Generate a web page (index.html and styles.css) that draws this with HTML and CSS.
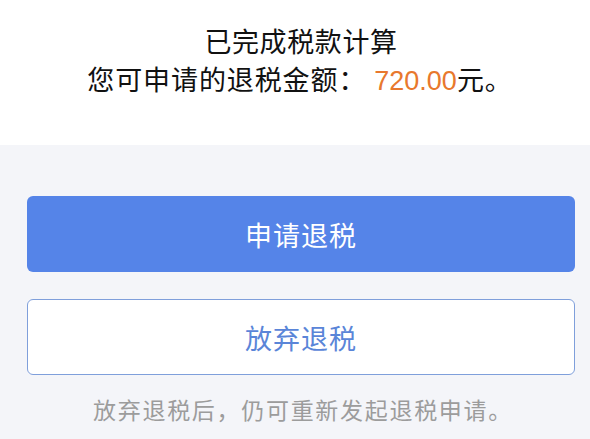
FILE: index.html
```html
<!DOCTYPE html>
<html lang="zh-CN">
<head>
<meta charset="utf-8">
<link rel="stylesheet" href="styles.css">
</head>
<body>
<div class="page">
  <section class="result">
    <p class="title">已完成税款计算</p>
    <p class="amount">您可申请的退税金额：<span class="money">720.00</span>元。</p>
  </section>
  <section class="actions">
    <button class="btn primary">申请退税</button>
    <button class="btn outline">放弃退税</button>
    <p class="hint">放弃退税后，仍可重新发起退税申请。</p>
  </section>
</div>
</body>
</html>
```
FILE: styles.css
```css
* { box-sizing: border-box; }
html, body { margin: 0; padding: 0; }
body {
  width: 590px;
  height: 439px;
  overflow: hidden;
  background: #f4f5f9;
  font-family: "Noto Sans CJK SC", "Noto Sans", sans-serif;
}
.page { display: flex; flex-direction: column; }
.result {
  background: #ffffff;
  height: 145px;
  padding-top: 22px;
  text-align: center;
  color: #111;
}
.result p { margin: 0; font-size: 27px; line-height: 38px; letter-spacing: 0.6px; }
.result .title { padding-left: 12px; }
.result .amount { letter-spacing: 0.9px; padding-left: 10px; }
.money {
  color: #e8782d;
  font-family: "Liberation Sans", "Noto Sans", sans-serif;
  font-size: 27px;
  letter-spacing: 0;
  margin-left: 8px;
}
.actions {
  display: flex;
  flex-direction: column;
  padding: 51px 15px 0 27px;
}
.btn {
  width: 548px;
  height: 76px;
  border-radius: 6px;
  font-family: inherit;
  font-size: 27px;
  letter-spacing: 1px;
  cursor: pointer;
}
.primary {
  background: #5584e8;
  color: #ffffff;
  border: none;
}
.outline {
  margin-top: 27px;
  background: #ffffff;
  color: #5a85d8;
  border: 1px solid #7f9fdb;
}
.hint {
  margin: 17px 0 0;
  width: 548px;
  padding-left: 4px;
  text-align: center;
  font-size: 23px;
  letter-spacing: 1.7px;
  color: #9c9c9c;
}
```
